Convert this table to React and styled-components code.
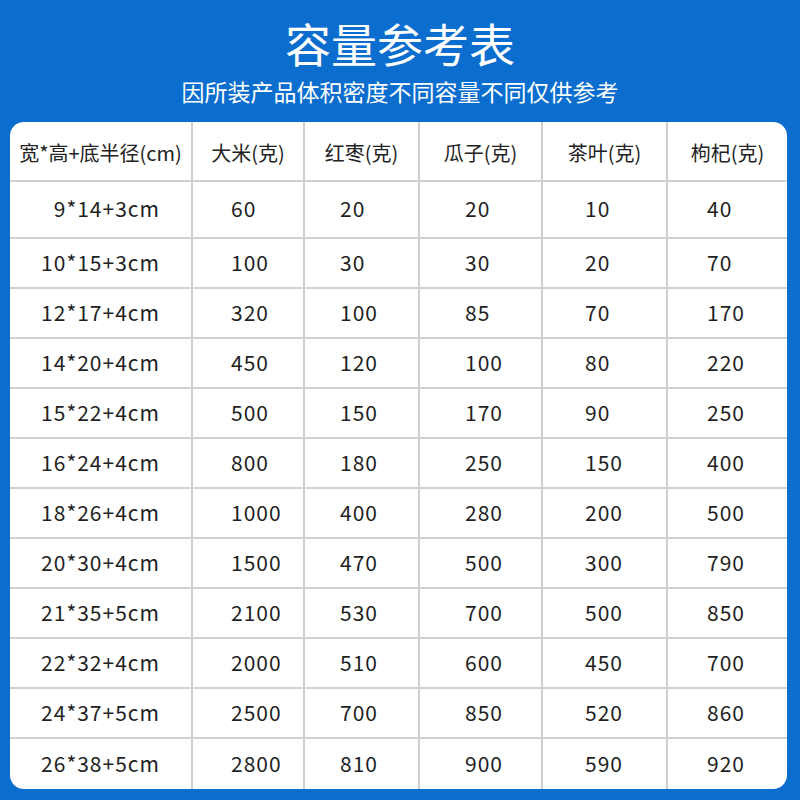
import React from 'react';
import styled, { createGlobalStyle } from 'styled-components';

const GlobalStyle = createGlobalStyle`
  html, body {
    margin: 0;
    padding: 0;
    background: #0b6ecf;
  }
  body {
    font-family: "Noto Sans CJK SC", "Noto Sans", sans-serif;
  }
`;

const headers = ['宽*高+底半径(cm)', '大米(克)', '红枣(克)', '瓜子(克)', '茶叶(克)', '枸杞(克)'];

const rows = [
  ['9*14+3cm', 60, 20, 20, 10, 40],
  ['10*15+3cm', 100, 30, 30, 20, 70],
  ['12*17+4cm', 320, 100, 85, 70, 170],
  ['14*20+4cm', 450, 120, 100, 80, 220],
  ['15*22+4cm', 500, 150, 170, 90, 250],
  ['16*24+4cm', 800, 180, 250, 150, 400],
  ['18*26+4cm', 1000, 400, 280, 200, 500],
  ['20*30+4cm', 1500, 470, 500, 300, 790],
  ['21*35+5cm', 2100, 530, 700, 500, 850],
  ['22*32+4cm', 2000, 510, 600, 450, 700],
  ['24*37+5cm', 2500, 700, 850, 520, 860],
  ['26*38+5cm', 2800, 810, 900, 590, 920],
];

// left padding of the value in each data column
const valuePad = [0, 38, 35, 45, 42, 39];

const Page = styled.div`
  width: 800px;
  height: 800px;
  background: #0b6ecf;
  overflow: hidden;
  display: flex;
  flex-direction: column;
`;

const Heading = styled.div`
  display: flex;
  flex-direction: column;
  align-items: center;
  color: #fff;
  padding-top: 13px;
  height: 122px;
  box-sizing: border-box;
`;

const Title = styled.h1`
  margin: 0;
  font-size: 46px;
  line-height: 58px;
  font-weight: 400;
`;

const Subtitle = styled.div`
  font-size: 23px;
  line-height: 30px;
  margin-top: 5px;
`;

const Card = styled.div`
  margin-left: 10px;
  width: 777px;
  background: #fff;
  border-radius: 14px;
  overflow: hidden;
  display: grid;
  grid-template-columns: 183px 112px 115px 123px 125px 119px;
  grid-template-rows: 60px 57px repeat(11, 50px);
`;

const Cell = styled.div`
  display: flex;
  align-items: center;
  font-size: 21px;
  letter-spacing: 1px;
  color: #1f1f1f;
  padding-bottom: 3px;
  border-right: ${p => (p.$last ? 'none' : '2px solid #cfcfcf')};
  border-bottom: ${p => (p.$bottom ? 'none' : '2px solid #d2d2d2')};
  box-sizing: border-box;
  white-space: nowrap;
`;

const HeadCell = styled(Cell)`
  justify-content: center;
  font-size: 20px;
  letter-spacing: 0;
  color: #222;
  padding-bottom: 0;
  padding-top: 2px;
`;

const SizeCell = styled(Cell)`
  justify-content: flex-end;
  padding-right: 31px;
`;

const ValueCell = styled(Cell)`
  justify-content: flex-start;
  padding-left: ${p => p.$pad}px;
`;

export default function App() {
  return (
    <>
      <GlobalStyle />
      <Page>
        <Heading>
          <Title>容量参考表</Title>
          <Subtitle>因所装产品体积密度不同容量不同仅供参考</Subtitle>
        </Heading>
        <Card>
          {headers.map((h, i) => (
            <HeadCell key={h} $last={i === headers.length - 1}>{h}</HeadCell>
          ))}
          {rows.map((row, r) =>
            row.map((v, c) => {
              const bottom = r === rows.length - 1;
              const last = c === row.length - 1;
              return c === 0 ? (
                <SizeCell key={`${r}-${c}`} $bottom={bottom}>{v}</SizeCell>
              ) : (
                <ValueCell key={`${r}-${c}`} $pad={valuePad[c]} $bottom={bottom} $last={last}>
                  {v}
                </ValueCell>
              );
            })
          )}
        </Card>
      </Page>
    </>
  );
}
